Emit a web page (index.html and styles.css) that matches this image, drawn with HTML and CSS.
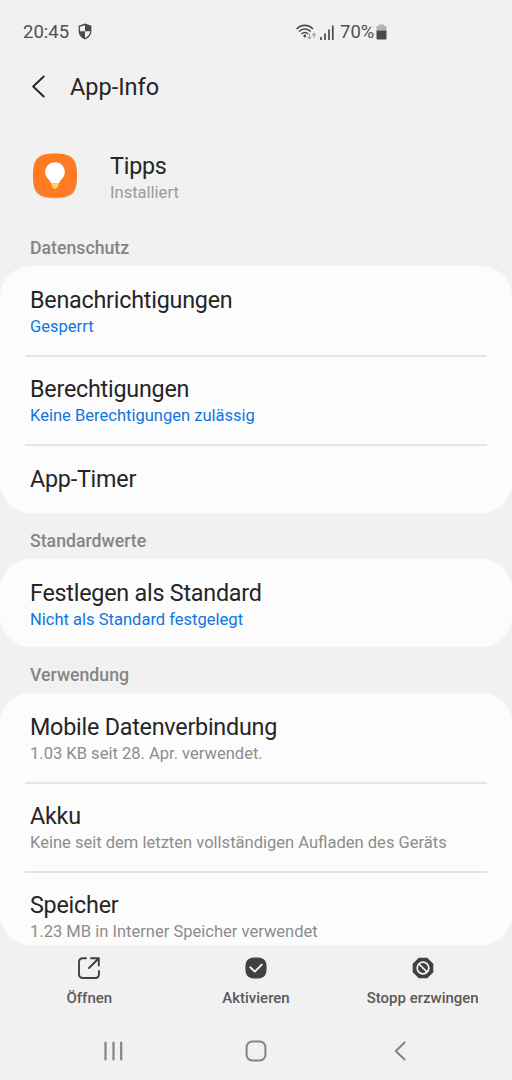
FILE: index.html
```html
<!DOCTYPE html>
<html lang="de">
  <head>
    <meta charset="UTF-8" />
    <meta name="viewport" content="width=device-width, initial-scale=1.0" />
    <title>App-Info</title>
    <link rel="stylesheet" href="styles.css">
  </head>
  <body>
    <div class="screen">
      <div class="statusbar">
        <span class="time">20:45</span>
        <svg class="shield" width="14" height="17" viewBox="0 0 14 17">
          <path d="M7 0.5 L13.4 2.8 V8 C13.4 12 10.6 15.2 7 16.4 C3.4 15.2 0.6 12 0.6 8 V2.8 Z" fill="#4a4a4a" />
          <path d="M7 2.2 V8.3 H1.9 V3.8 Z" fill="#f1f1f1" />
          <path d="M7 8.3 H12.1 C12 11.4 9.8 13.9 7 14.9 Z" fill="#f1f1f1" />
        </svg>
        <div class="indicators">
          <svg width="21" height="17" viewBox="0 0 21 17">
            <g fill="none" stroke="#4a4a4a" stroke-width="1.6">
              <path d="M0.6 5 C5 0.2 12.6 0.2 17 5" />
              <path d="M3 7.5 C6.3 4.1 11.3 4.1 14.6 7.5" />
              <path d="M5.4 10 C7.4 8 10.2 8 12.2 10" />
            </g>
            <circle cx="8.8" cy="12" r="1.4" fill="#4a4a4a" />
            <g fill="none" stroke="#a5a5a5" stroke-width="1.2">
              <path d="M13.5 10 V14.5 M11.8 12.8 L13.5 14.6 L15.2 12.8" />
              <path d="M18 14 V9.5 M16.3 11.2 L18 9.4 L19.7 11.2" />
            </g>
          </svg>
          <svg class="signal" width="14" height="15" viewBox="0 0 14 15">
            <path d="M1 12 V15 M5 8.5 V15 M9 4.5 V15 M12.8 0.5 V15" stroke="#4a4a4a" stroke-width="1.7" />
          </svg>
          <span class="percent">70%</span>
          <svg class="battery" width="11" height="16" viewBox="0 0 11 16">
            <path d="M3 0.5 H8 V2 H10.5 V6.5 H0.5 V2 H3 Z" fill="#b3b3b3" />
            <path d="M0.5 6.5 H10.5 V14.5 Q10.5 15.5 9.5 15.5 H1.5 Q0.5 15.5 0.5 14.5 Z" fill="#4a4a4a" />
          </svg>
        </div>
      </div>

      <div class="toolbar">
        <svg width="14" height="24" viewBox="0 0 14 24">
          <path d="M12.7 1.5 L2.2 11.5 L12.7 21.5" fill="none" stroke="#252525" stroke-width="1.9" stroke-linecap="round" stroke-linejoin="round" />
        </svg>
        <h1>App-Info</h1>
      </div>

      <div class="app">
        <svg class="app-icon" width="46" height="46" viewBox="0 0 46 46">
          <path d="M23 1.4 C40 1.4 45 6.4 45 23.4 C45 40.4 40 45.4 23 45.4 C6 45.4 1 40.4 1 23.4 C1 6.4 6 1.4 23 1.4 Z" fill="#c9c1bb" />
          <path d="M23 0.6 C40 0.6 45 5.6 45 22.6 C45 39.6 40 44.6 23 44.6 C6 44.6 1 39.6 1 22.6 C1 5.6 6 0.6 23 0.6 Z" fill="#ff7b22" />
          <path d="M23 9.3 A9.7 9.7 0 0 1 29.8 26 Q27.5 28.2 27 30.3 H19 Q18.5 28.2 16.2 26 A9.7 9.7 0 0 1 23 9.3 Z" fill="#fff" />
          <path d="M19 30.3 H27 L25.4 34.5 Q23 37.4 20.6 34.5 Z" fill="#f9d860" />
        </svg>
        <div class="app-text">
          <div class="title">Tipps</div>
          <div class="summary">Installiert</div>
        </div>
      </div>

      <h2>Datenschutz</h2>
      <div class="card">
        <div class="row">
          <div class="title">Benachrichtigungen</div>
          <div class="summary blue">Gesperrt</div>
        </div>
        <div class="row">
          <div class="title">Berechtigungen</div>
          <div class="summary blue">Keine Berechtigungen zulässig</div>
        </div>
        <div class="row single">
          <div class="title">App-Timer</div>
        </div>
      </div>

      <h2>Standardwerte</h2>
      <div class="card default">
        <div class="row">
          <div class="title">Festlegen als Standard</div>
          <div class="summary blue">Nicht als Standard festgelegt</div>
        </div>
      </div>

      <h2>Verwendung</h2>
      <div class="card last">
        <div class="row">
          <div class="title">Mobile Datenverbindung</div>
          <div class="summary">1.03 KB seit 28. Apr. verwendet.</div>
        </div>
        <div class="row">
          <div class="title">Akku</div>
          <div class="summary">Keine seit dem letzten vollständigen Aufladen des Geräts</div>
        </div>
        <div class="row">
          <div class="title">Speicher</div>
          <div class="summary">1.23 MB in Interner Speicher verwendet</div>
        </div>
      </div>

      <div class="actions">
        <div class="action">
          <svg width="22" height="22" viewBox="0 0 22 22">
            <g fill="none" stroke="#404040" stroke-width="1.9" stroke-linecap="round" stroke-linejoin="round">
              <path d="M8 1.2 H5 Q1 1.2 1 5.2 V17 Q1 21 5 21 H17 Q21 21 21 17 V14" />
              <path d="M11 11 L20 2 M13 1.2 H20.8 V8.5" />
            </g>
          </svg>
          <span>Öffnen</span>
        </div>
        <div class="action">
          <svg width="22" height="22" viewBox="0 0 22 22">
            <path d="M11 0.5 C19 0.5 21.6 3 21.6 11 C21.6 19 19 21.6 11 21.6 C3 21.6 0.4 19 0.4 11 C0.4 3 3 0.5 11 0.5 Z" fill="#404040" />
            <path d="M5.3 10.3 L9.8 14.6 L16.8 7.6" fill="none" stroke="#f7f7f7" stroke-width="1.9" stroke-linecap="round" stroke-linejoin="round" />
          </svg>
          <span>Aktivieren</span>
        </div>
        <div class="action">
          <svg width="22" height="22" viewBox="0 0 22 22">
            <path d="M6.8 0.7 H15.2 L21.3 6.8 V15.2 L15.2 21.3 H6.8 L0.7 15.2 V6.8 Z" fill="#404040" />
            <g fill="none" stroke="#f7f7f7" stroke-width="1.7">
              <circle cx="11" cy="11" r="5.8" />
              <path d="M7 7 L15 15" />
            </g>
          </svg>
          <span>Stopp erzwingen</span>
        </div>
      </div>

      <div class="navbar">
        <svg width="20" height="20" viewBox="0 0 20 20">
          <path d="M2.5 1.5 V18.5 M10.5 1.5 V18.5 M18.2 1.5 V18.5" stroke="#848484" stroke-width="2.2" stroke-linecap="round" />
        </svg>
        <svg class="home" width="22" height="22" viewBox="0 0 22 22">
          <rect x="1.6" y="1.6" width="18.8" height="18.8" rx="5.5" fill="none" stroke="#848484" stroke-width="2" />
        </svg>
        <svg width="12" height="20" viewBox="0 0 12 20">
          <path d="M10.6 1.5 L1.8 10 L10.6 18.5" fill="none" stroke="#848484" stroke-width="2" stroke-linecap="round" stroke-linejoin="round" />
        </svg>
      </div>
    </div>
  </body>
</html>
```
FILE: styles.css
```css
body {
  font-family: Roboto, sans-serif;
  margin: 0;
  background-color: #f1f1f1;
  color: #252525;
}

.screen {
  width: 512px;
  height: 1080px;
  overflow: hidden;
}

.statusbar {
  display: flex;
  align-items: center;
  height: 64px;
  padding-left: 23px;
  box-sizing: border-box;
  color: #505050;
  font-size: 18.5px;
}
.time {
  width: 55px;
}
.shield {
  margin-bottom: 2px;
}
.indicators {
  display: flex;
  align-items: center;
  margin-left: 204px;
}
.signal {
  margin-left: 3px;
}
.percent {
  margin-left: 6px;
}
.battery {
  margin-left: 2px;
  margin-bottom: 1px;
}

.toolbar {
  display: flex;
  align-items: center;
  height: 46px;
  padding-left: 31px;
}
h1 {
  margin: 0 0 0 25px;
  font-size: 23.5px;
  font-weight: normal;
}

.app {
  display: flex;
  align-items: center;
  height: 128px;
  padding: 4px 0 0 32px;
  box-sizing: border-box;
}
.app-icon {
  margin-right: 32px;
}
.app-text {
  padding-top: 4px;
}
.app .summary {
  color: #9a9a9a;
}

h2 {
  margin: 0;
  height: 46px;
  padding: 16px 30px 0;
  box-sizing: border-box;
  font-size: 17.7px;
  line-height: 25px;
  font-weight: 500;
  color: #858585;
}
.app + h2 {
  height: 30px;
  padding-top: 0;
  margin-top: -2px;
}

.card {
  background-color: #fcfcfc;
  border-radius: 31px;
  overflow: hidden;
}
.row {
  height: 89px;
  margin: 0 25px;
  padding: 20px 5px 0;
  box-sizing: border-box;
}
.row + .row {
  border-top: 2px solid #e4e4e4;
  padding-top: 18px;
}
.row.single {
  height: 69px;
  padding-top: 19px;
}
.default {
  height: 88px;
}
.last {
  height: 252px;
}

.title {
  font-size: 23.3px;
  line-height: 29px;
  letter-spacing: -0.22px;
}
.summary {
  font-size: 16.55px;
  line-height: 24px;
  color: #8c8c8c;
  white-space: nowrap;
}
.blue {
  color: #0f76dc;
}

.actions {
  display: grid;
  grid-template-columns: repeat(3, 1fr);
  margin: 0 6px;
  height: 75px;
}
.action {
  display: flex;
  flex-direction: column;
  align-items: center;
  padding-top: 12px;
  color: #5a5a5a;
  font-size: 15px;
  font-weight: 500;
}
.action span {
  margin-top: 10px;
}

.navbar {
  display: flex;
  align-items: center;
  justify-content: space-between;
  height: 61px;
  padding: 0 106px 0 103px;
}
.home {
  margin-right: 5px;
}
```
